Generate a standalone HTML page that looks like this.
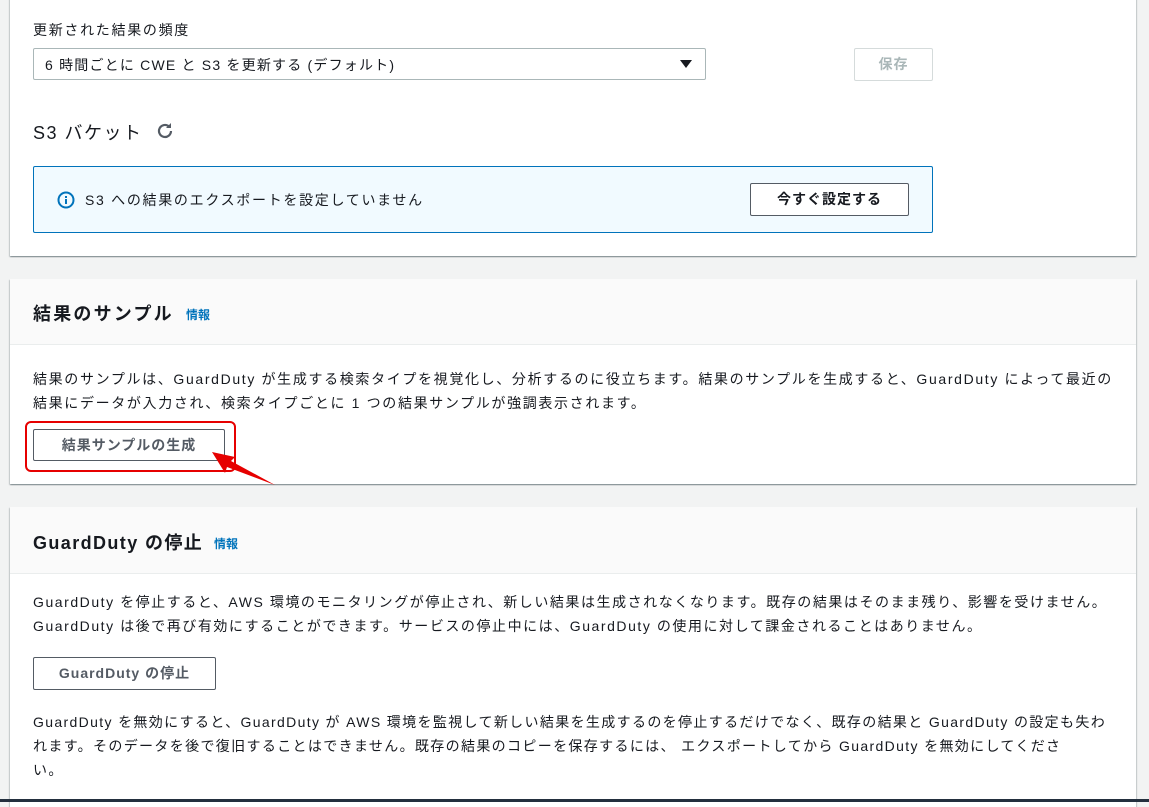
<!DOCTYPE html>
<html><head><meta charset="utf-8"><style>
body{margin:0;width:1149px;height:802px;background:#f2f3f3;position:relative;overflow:hidden;font-family:"Liberation Sans","Noto Sans CJK JP",sans-serif;color:#16191f;font-size:14px}
.a{position:absolute;white-space:nowrap}
.card{position:absolute;left:10px;width:1126px;background:#fff;box-shadow:0 1px 1px rgba(0,28,36,.3),1px 1px 1px rgba(0,28,36,.15),-1px 1px 1px rgba(0,28,36,.15)}
.hd{position:absolute;left:0;right:0;top:0;background:#fafafa;border-bottom:1px solid #eaeded}
.btn{position:absolute;border:1px solid #545b64;border-radius:2px;background:#fff;font-weight:bold;color:#545b64;text-align:center;box-sizing:border-box;letter-spacing:1px}
.info{color:#0073bb;font-size:12px;font-weight:bold}
h2{margin:0;font-size:18px;font-weight:bold;position:absolute;white-space:nowrap;letter-spacing:1.6px}
p{margin:0;position:absolute;white-space:nowrap;line-height:24px;font-size:14px;letter-spacing:1.65px}
</style></head><body>
<div class="card" style="top:-5px;height:261px"></div>
<div class="a" style="left:33px;top:20px;letter-spacing:1.7px">更新された結果の頻度</div>
<div class="a" style="left:33px;top:48px;width:673px;height:32px;border:1px solid #aab7b8;border-radius:2px;box-sizing:border-box;background:#fff"></div>
<div class="a" style="left:45px;top:55px;font-size:14px;letter-spacing:1.2px">6 時間ごとに CWE と S3 を更新する (デフォルト)</div>
<div class="a" style="left:680px;top:60px;width:0;height:0;border-left:6px solid transparent;border-right:6px solid transparent;border-top:8px solid #16191f"></div>
<div class="btn" style="left:854px;top:48px;width:79px;height:33px;border-color:#d5dbdb;color:#aab7b8;line-height:31px">保存</div>
<div class="a" style="left:33px;top:119px;font-size:18px;letter-spacing:1.5px">S3 バケット</div>
<svg class="a" style="left:155px;top:121px" width="20" height="20" viewBox="0 0 20 20"><path d="M16 10a6 6 0 1 1-2-4.5" fill="none" stroke="#545b64" stroke-width="2.2"/><path d="M16 2v5h-5z" fill="#545b64"/></svg>
<div class="a" style="left:33px;top:166px;width:900px;height:67px;border:1px solid #0073bb;border-radius:2px;background:#f1faff;box-sizing:border-box"></div>
<svg class="a" style="left:57px;top:191px" width="18" height="18" viewBox="0 0 18 18"><circle cx="9" cy="9" r="7.5" fill="none" stroke="#0073bb" stroke-width="2"/><rect x="8" y="8" width="2" height="5" fill="#0073bb"/><rect x="8" y="5" width="2" height="2" fill="#0073bb"/></svg>
<div class="a" style="left:85px;top:190px;letter-spacing:1.7px">S3 への結果のエクスポートを設定していません</div>
<div class="btn" style="left:750px;top:183px;width:159px;height:33px;line-height:31px;color:#16191f;border-color:#545b64">今すぐ設定する</div>

<div class="card" style="top:279px;height:205px"><div class="hd" style="height:65px"></div></div>
<h2 style="left:33px;top:300px;letter-spacing:2.2px">結果のサンプル</h2><span class="a info" style="left:186px;top:306px">情報</span>
<p style="left:33px;top:367px">結果のサンプルは、GuardDuty が生成する検索タイプを視覚化し、分析するのに役立ちます。結果のサンプルを生成すると、GuardDuty によって最近の<br>結果にデータが入力され、検索タイプごとに 1 つの結果サンプルが強調表示されます。</p>
<div class="btn" style="left:33px;top:429px;width:192px;height:32px;line-height:30px">結果サンプルの生成</div>
<div class="a" style="left:25px;top:421px;width:211px;height:51px;border:2px solid #e60000;border-radius:6px;box-sizing:border-box"></div>
<svg class="a" style="left:205px;top:445px" width="75" height="45"><polygon points="7,7 30,12 26,16 70,40 22,22 20,28" fill="#e60000"/></svg>

<div class="card" style="top:507px;height:300px"><div class="hd" style="height:66px"></div></div>
<h2 style="left:33px;top:529px;letter-spacing:1.4px">GuardDuty の停止</h2><span class="a info" style="left:214px;top:535px">情報</span>
<p style="left:33px;top:590px;letter-spacing:1.55px">GuardDuty を停止すると、AWS 環境のモニタリングが停止され、新しい結果は生成されなくなります。既存の結果はそのまま残り、影響を受けません。<br>GuardDuty は後で再び有効にすることができます。サービスの停止中には、GuardDuty の使用に対して課金されることはありません。</p>
<div class="btn" style="left:33px;top:657px;width:183px;height:33px;line-height:31px">GuardDuty の停止</div>
<p style="left:33px;top:710px;letter-spacing:1.35px">GuardDuty を無効にすると、GuardDuty が AWS 環境を監視して新しい結果を生成するのを停止するだけでなく、既存の結果と GuardDuty の設定も失わ<br>れます。そのデータを後で復旧することはできません。既存の結果のコピーを保存するには、 エクスポートしてから GuardDuty を無効にしてくださ<br>い。</p>
<div class="a" style="left:0;top:799px;width:1149px;height:3px;background:#232f3e"></div>
</body></html>
